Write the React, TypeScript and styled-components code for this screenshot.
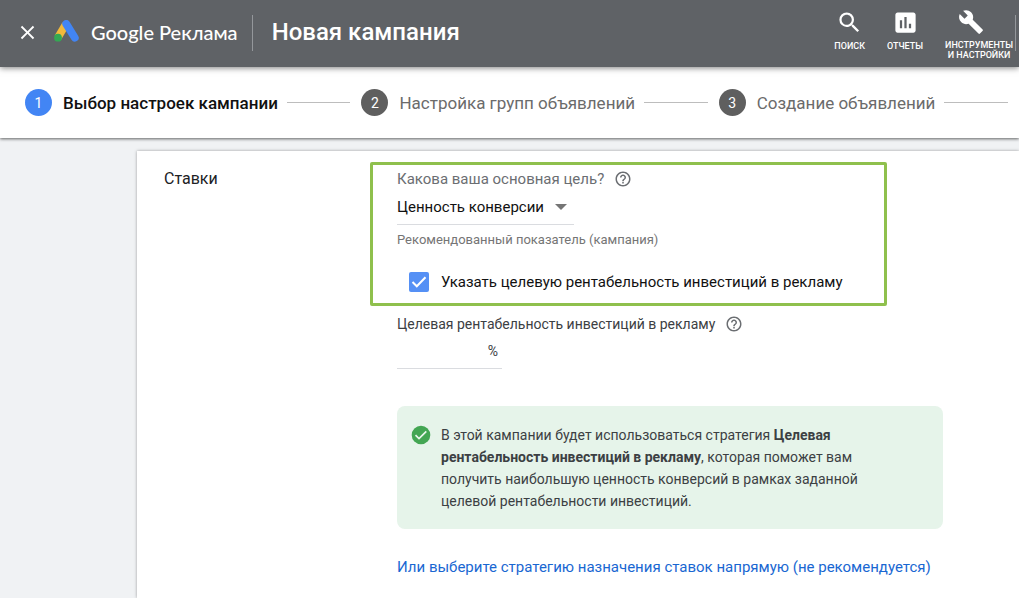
import React from "react";
import styled, { createGlobalStyle } from "styled-components";
import { MdBuild, MdClose, MdHelpOutline, MdInsertChart, MdSearch } from "react-icons/md";

const GlobalStyle = createGlobalStyle`
  *, *::before, *::after { box-sizing: border-box; }
  body {
    margin: 0;
    background: #f0f2f4;
    color: #3c4043;
    font-family: Roboto, "Noto Sans", sans-serif;
    font-size: 14px;
  }
  button, input, select { font: inherit; color: inherit; }
`;

const Page = styled.div`
  min-height: 100vh;
  display: flex;
  flex-direction: column;
  overflow: hidden;
`;

const TopBar = styled.header`
  position: relative;
  z-index: 2;
  display: flex;
  align-items: flex-start;
  height: 67px;
  padding: 0 3px 0 15px;
  background: #5f6266;
  color: #fff;
  box-shadow: 0 1px 6px rgba(0, 0, 0, 0.5);
`;

const IconButton = styled.button`
  flex: none;
  display: flex;
  align-items: center;
  justify-content: center;
  width: 25px;
  height: 64px;
  padding: 0;
  border: 0;
  background: none;
`;

const Brand = styled.a`
  flex: none;
  display: flex;
  align-items: center;
  gap: 12px;
  height: 64px;
  margin: 0 14px 0 13px;
  color: #fff;
  font-family: Lato, Roboto, sans-serif;
  font-size: 20px;
  font-weight: 500;
  text-decoration: none;
  white-space: nowrap;
`;

const Divider = styled.span`
  flex: none;
  width: 1px;
  height: 36px;
  margin-top: 15px;
  background: #94979b;
`;

const BarTitle = styled.h1`
  flex: 1;
  margin: 0 0 0 19px;
  font-size: 24px;
  font-weight: 500;
  line-height: 64px;
  white-space: nowrap;
`;

const Tools = styled.nav`
  display: flex;
  align-items: flex-start;
  gap: 22px;
  margin-right: 2px;
`;

const ToolButton = styled.button<{ $iconShift?: boolean }>`
  display: flex;
  flex-direction: column;
  align-items: center;
  gap: 5px;
  padding: 9px 0 0;
  border: 0;
  background: none;
  font-size: 9px;
  font-weight: 500;
  line-height: 10px;
  text-align: center;
  text-transform: uppercase;

  svg {
    margin-right: ${({ $iconShift }) => ($iconShift ? "16px" : "0")};
  }
`;

const Stepper = styled.ol`
  position: relative;
  z-index: 1;
  display: flex;
  align-items: center;
  height: 71px;
  margin: 0;
  padding: 0 11px 0 25px;
  list-style: none;
  background: #fff;
  box-shadow: 0 1px 3px rgba(0, 0, 0, 0.6);
`;

const StepItem = styled.li<{ $active?: boolean }>`
  flex: 1 0 auto;
  display: flex;
  align-items: center;
  color: ${({ $active }) => ($active ? "#111" : "#6b6b6b")};
  font-size: 17px;
  font-weight: ${({ $active }) => ($active ? 500 : 400)};
  line-height: 20px;
  white-space: nowrap;

  & + & { margin-left: 11px; }

  &::after {
    content: "";
    flex: 1;
    height: 1px;
    margin-left: 9px;
    background: #bdbdbd;
  }
`;

const StepNumber = styled.span<{ $active?: boolean }>`
  display: flex;
  align-items: center;
  justify-content: center;
  width: 27px;
  height: 27px;
  margin-right: 11px;
  border-radius: 50%;
  background: ${({ $active }) => ($active ? "#4285f4" : "#5f5f5f")};
  color: #fff;
  font-size: 14px;
  font-weight: 400;
`;

const Card = styled.main`
  flex: 1;
  display: grid;
  grid-template-columns: 206px minmax(0, 1fr);
  margin: 13px 0 0 137px;
  padding: 11px 0 0 27px;
  background: #fff;
  box-shadow: 0 0 3px rgba(0, 0, 0, 0.35);
`;

const SectionTitle = styled.h2`
  margin: 6px 0 0;
  color: #202124;
  font-size: 16px;
  font-weight: 400;
  line-height: 22px;
`;

const Goal = styled.section`
  width: 517px;
  max-width: 100%;
  height: 144px;
  padding: 4px 24px 0;
  border: 3px solid #8fc04d;
  border-radius: 2px;
`;

const Fields = styled.section`
  display: flex;
  flex-direction: column;
  align-items: flex-start;
  padding: 8px 27px 20px;
`;

const LabelRow = styled.div<{ $large?: boolean }>`
  display: flex;
  align-items: center;
  gap: 10px;
  height: 20px;
  color: ${({ $large }) => ($large ? "#6b6e72" : "#3c4043")};
  font-size: ${({ $large }) => ($large ? "15px" : "14px")};
`;

const HelpButton = styled.button`
  display: flex;
  padding: 0;
  border: 0;
  background: none;
  color: #6b6e72;
`;

const SelectBox = styled.div`
  position: relative;
  width: 177px;
  height: 36px;
  border-bottom: 1px solid #dadce0;

  &::after {
    content: "";
    position: absolute;
    top: 15px;
    right: 7px;
    border: 6px solid transparent;
    border-top-color: #757575;
    border-bottom: 0;
    pointer-events: none;
  }
`;

const Select = styled.select`
  appearance: none;
  width: 100%;
  height: 35px;
  padding: 0;
  border: 0;
  outline: 0;
  background: transparent;
  color: #111;
  font-size: 15px;
`;

const Hint = styled.p`
  margin: 5px 0 0;
  color: #757575;
  font-size: 13px;
  line-height: 20px;
`;

const CheckRow = styled.label`
  display: flex;
  align-items: center;
  gap: 12px;
  margin: 22px 0 0 12px;
  color: #111;
  font-size: 15px;
  line-height: 20px;
  white-space: nowrap;
`;

const CheckWrap = styled.span`
  position: relative;
  display: flex;

  svg {
    position: absolute;
    inset: 0;
    pointer-events: none;
  }
`;

const Checkbox = styled.input`
  appearance: none;
  width: 20px;
  height: 20px;
  margin: 0;
  border-radius: 2px;
  background: #5590f5;
`;

const PercentField = styled.div`
  display: flex;
  align-items: center;
  width: 105px;
  height: 35px;
  padding-right: 4px;
  border-bottom: 1px solid #dadce0;
`;

const PercentInput = styled.input`
  flex: 1;
  min-width: 0;
  padding: 0;
  border: 0;
  outline: 0;
  background: none;
  text-align: right;
`;

const Notice = styled.div`
  display: flex;
  align-items: flex-start;
  gap: 10px;
  width: 546px;
  max-width: 100%;
  margin-top: 37px;
  padding: 18px 60px 17px 14px;
  border-radius: 8px;
  background: #e6f4ea;

  svg { flex: none; }

  p {
    margin: 0;
    font-size: 14px;
    line-height: 22px;
  }
`;

const StrategyLink = styled.a`
  margin-top: 28px;
  color: #1967d2;
  font-size: 15px;
  line-height: 20px;
  text-decoration: none;
  white-space: nowrap;
`;

const AdsLogo = () => (
  <svg width="26" height="24" viewBox="0 0 26 24" aria-hidden="true">
    <path d="M12.600 4.500 5 17.500" stroke="#f2b93b" strokeWidth="7.600" />
    <circle cx="5" cy="17.700" r="3.900" fill="#34a853" />
    <path d="M13.200 3.900 21.800 17.700" stroke="#4285f4" strokeWidth="7.800" strokeLinecap="round" />
  </svg>
);

const Tick = () => (
  <svg width="20" height="20" viewBox="0 0 20 20" aria-hidden="true">
    <path d="m3.500 10 4.300 4.300L16.500 5.300" fill="none" stroke="#fff" strokeWidth="2" />
  </svg>
);

const Success = () => (
  <svg width="20" height="22" viewBox="0 0 20 22" aria-hidden="true">
    <circle cx="10" cy="11" r="9.300" fill="#43a653" />
    <path d="m4.500 11.200 3.500 3.400 7.300-7.200" fill="none" stroke="#e9f6ec" strokeWidth="1.700" />
  </svg>
);

const steps = ["Выбор настроек кампании", "Настройка групп объявлений", "Создание объявлений"];

export default function App() {
  return (
    <Page>
      <GlobalStyle />
      <TopBar>
        <IconButton type="button" aria-label="Закрыть">
          <MdClose size={23} />
        </IconButton>
        <Brand href="#">
          <AdsLogo />
          Google Реклама
        </Brand>
        <Divider />
        <BarTitle>Новая кампания</BarTitle>
        <Tools>
          <ToolButton type="button">
            <MdSearch size={27} />
            Поиск
          </ToolButton>
          <ToolButton type="button">
            <MdInsertChart size={27} />
            Отчеты
          </ToolButton>
          <ToolButton type="button" $iconShift>
            <MdBuild size={26} />
            <span>
              Инструменты
              <br />и настройки
            </span>
          </ToolButton>
        </Tools>
        <Divider />
      </TopBar>

      <Stepper>
        {steps.map((label, i) => (
          <StepItem key={label} $active={i === 0}>
            <StepNumber $active={i === 0}>{i + 1}</StepNumber>
            {label}
          </StepItem>
        ))}
      </Stepper>

      <Card>
        <SectionTitle>Ставки</SectionTitle>
        <div>
          <Goal>
            <LabelRow $large>
              <label htmlFor="goal">Какова ваша основная цель?</label>
              <HelpButton type="button" aria-label="Справка">
                <MdHelpOutline size={18} />
              </HelpButton>
            </LabelRow>
            <SelectBox>
              <Select id="goal" defaultValue="value">
                <option value="value">Ценность конверсии</option>
              </Select>
            </SelectBox>
            <Hint>Рекомендованный показатель (кампания)</Hint>
            <CheckRow>
              <CheckWrap>
                <Checkbox type="checkbox" defaultChecked />
                <Tick />
              </CheckWrap>
              Указать целевую рентабельность инвестиций в рекламу
            </CheckRow>
          </Goal>
          <Fields>
            <LabelRow>
              <label htmlFor="roas">Целевая рентабельность инвестиций в рекламу</label>
              <HelpButton type="button" aria-label="Справка">
                <MdHelpOutline size={18} />
              </HelpButton>
            </LabelRow>
            <PercentField>
              <PercentInput id="roas" type="text" inputMode="decimal" />
              %
            </PercentField>
            <Notice>
              <Success />
              <p>
                В этой кампании будет использоваться стратегия{" "}
                <b>Целевая рентабельность инвестиций в рекламу</b>, которая поможет вам получить
                наибольшую ценность конверсий в рамках заданной целевой рентабельности инвестиций.
              </p>
            </Notice>
            <StrategyLink href="#">
              Или выберите стратегию назначения ставок напрямую (не рекомендуется)
            </StrategyLink>
          </Fields>
        </div>
      </Card>
    </Page>
  );
}
